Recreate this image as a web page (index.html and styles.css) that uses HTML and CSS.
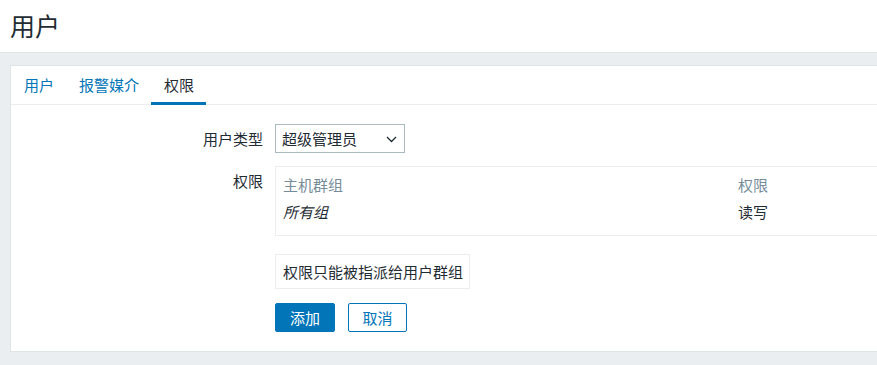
FILE: index.html
```html
<!DOCTYPE html>
<html lang="zh">
<head>
<meta charset="utf-8">
<title>用户</title>
<link rel="stylesheet" href="styles.css">
</head>
<body>
<header class="page-header">
  <h1 class="page-title">用户</h1>
</header>
<main class="main">
  <div class="panel">
    <nav class="tabs">
      <a class="tab">用户</a>
      <a class="tab">报警媒介</a>
      <a class="tab tab-active">权限</a>
    </nav>
    <form class="form">
      <div class="row">
        <label class="label label-mid">用户类型</label>
        <div class="control">
          <div class="select">
            <span>超级管理员</span>
            <svg class="chev" width="11" height="7" viewBox="0 0 11 7"><path d="M1 1 L5.5 5.5 L10 1" fill="none" stroke="#1f2c33" stroke-width="1.3"/></svg>
          </div>
        </div>
      </div>
      <div class="row">
        <label class="label label-top">权限</label>
        <div class="control">
          <div class="perm-table">
            <div class="perm-row perm-head">
              <span class="col1">主机群组</span>
              <span class="col2">权限</span>
            </div>
            <div class="perm-row">
              <span class="col1 italic">所有组</span>
              <span class="col2">读写</span>
            </div>
          </div>
        </div>
      </div>
      <div class="row row-info">
        <div class="label"></div>
        <div class="control">
          <div class="info">权限只能被指派给用户群组</div>
        </div>
      </div>
      <div class="row row-buttons">
        <div class="label"></div>
        <div class="control buttons">
          <button type="button" class="btn btn-primary">添加</button>
          <button type="button" class="btn btn-alt">取消</button>
        </div>
      </div>
    </form>
  </div>
</main>
</body>
</html>
```
FILE: styles.css
```css
* { box-sizing: border-box; }
html, body { margin: 0; padding: 0; }
body {
  background: #ebeef0;
  font-family: "Noto Sans CJK SC", "Noto Sans", sans-serif;
  font-size: 15px;
  color: #1f2c33;
  overflow: hidden;
  width: 877px;
  height: 365px;
}
.page-header {
  background: #fff;
  height: 53px;
  border-bottom: 1px solid #dfe4e7;
  padding-left: 10px;
  display: flex;
  align-items: center;
}
.page-title {
  margin: 0;
  font-size: 25px;
  font-weight: 400;
  line-height: 32px;
  margin-top: -3px;
  color: #1f2c33;
}
.main {
  padding: 12px 0 0 10px;
}
.panel {
  background: #fff;
  border: 1px solid #dfe4e7;
  width: 900px;
  height: 287px;
}
.tabs {
  display: flex;
  height: 39px;
  border-bottom: 1px solid #ebeef0;
}
.tab {
  padding: 0 12px 0 13px;
  line-height: 35px;
  color: #0275b8;
  border-bottom: 3px solid transparent;
  height: 39px;
  padding-top: 1px;
}
.tab-active {
  color: #1f2c33;
  border-bottom-color: #0275b8;
}
.form {
  padding-top: 19px;
}
.row {
  display: flex;
  margin-bottom: 13px;
}
.row-info { margin-top: 18px; margin-bottom: 14px; }
.label {
  width: 264px;
  flex: none;
  text-align: right;
  padding-right: 12px;
}
.label-mid { line-height: 29px; }
.label-top { padding-top: 5px; line-height: 20px; }
.control { flex: 1; }
.select {
  width: 130px;
  height: 29px;
  border: 1px solid #acbbc2;
  display: flex;
  align-items: center;
  justify-content: space-between;
  padding: 0 6px 0 6px;
  line-height: 27px;
}
.chev { margin-right: 1px; margin-top: 1px; }
.perm-table {
  border: 1px solid #ebeef0;
  height: 70px;
  padding: 8px 7px 0 7px;
}
.perm-row {
  display: flex;
  height: 27px;
  line-height: 20px;
}
.perm-head { color: #768d99; }
.col1 { width: 455px; }
.italic { font-style: italic; }
.info {
  display: inline-block;
  border: 1px solid #ebeef0;
  height: 35px;
  line-height: 33px;
  padding: 0 7px;
  width: 195px;
  white-space: nowrap;
}
.buttons { display: flex; gap: 13px; }
.btn {
  font-family: inherit;
  font-size: 15px;
  height: 29px;
  border-radius: 2px;
  padding: 0;
  line-height: 27px;
  cursor: pointer;
}
.btn-primary {
  width: 60px;
  background: #0275b8;
  border: 1px solid #0275b8;
  color: #fff;
}
.btn-alt {
  width: 59px;
  background: #fff;
  border: 1px solid #0275b8;
  color: #0275b8;
}
```
